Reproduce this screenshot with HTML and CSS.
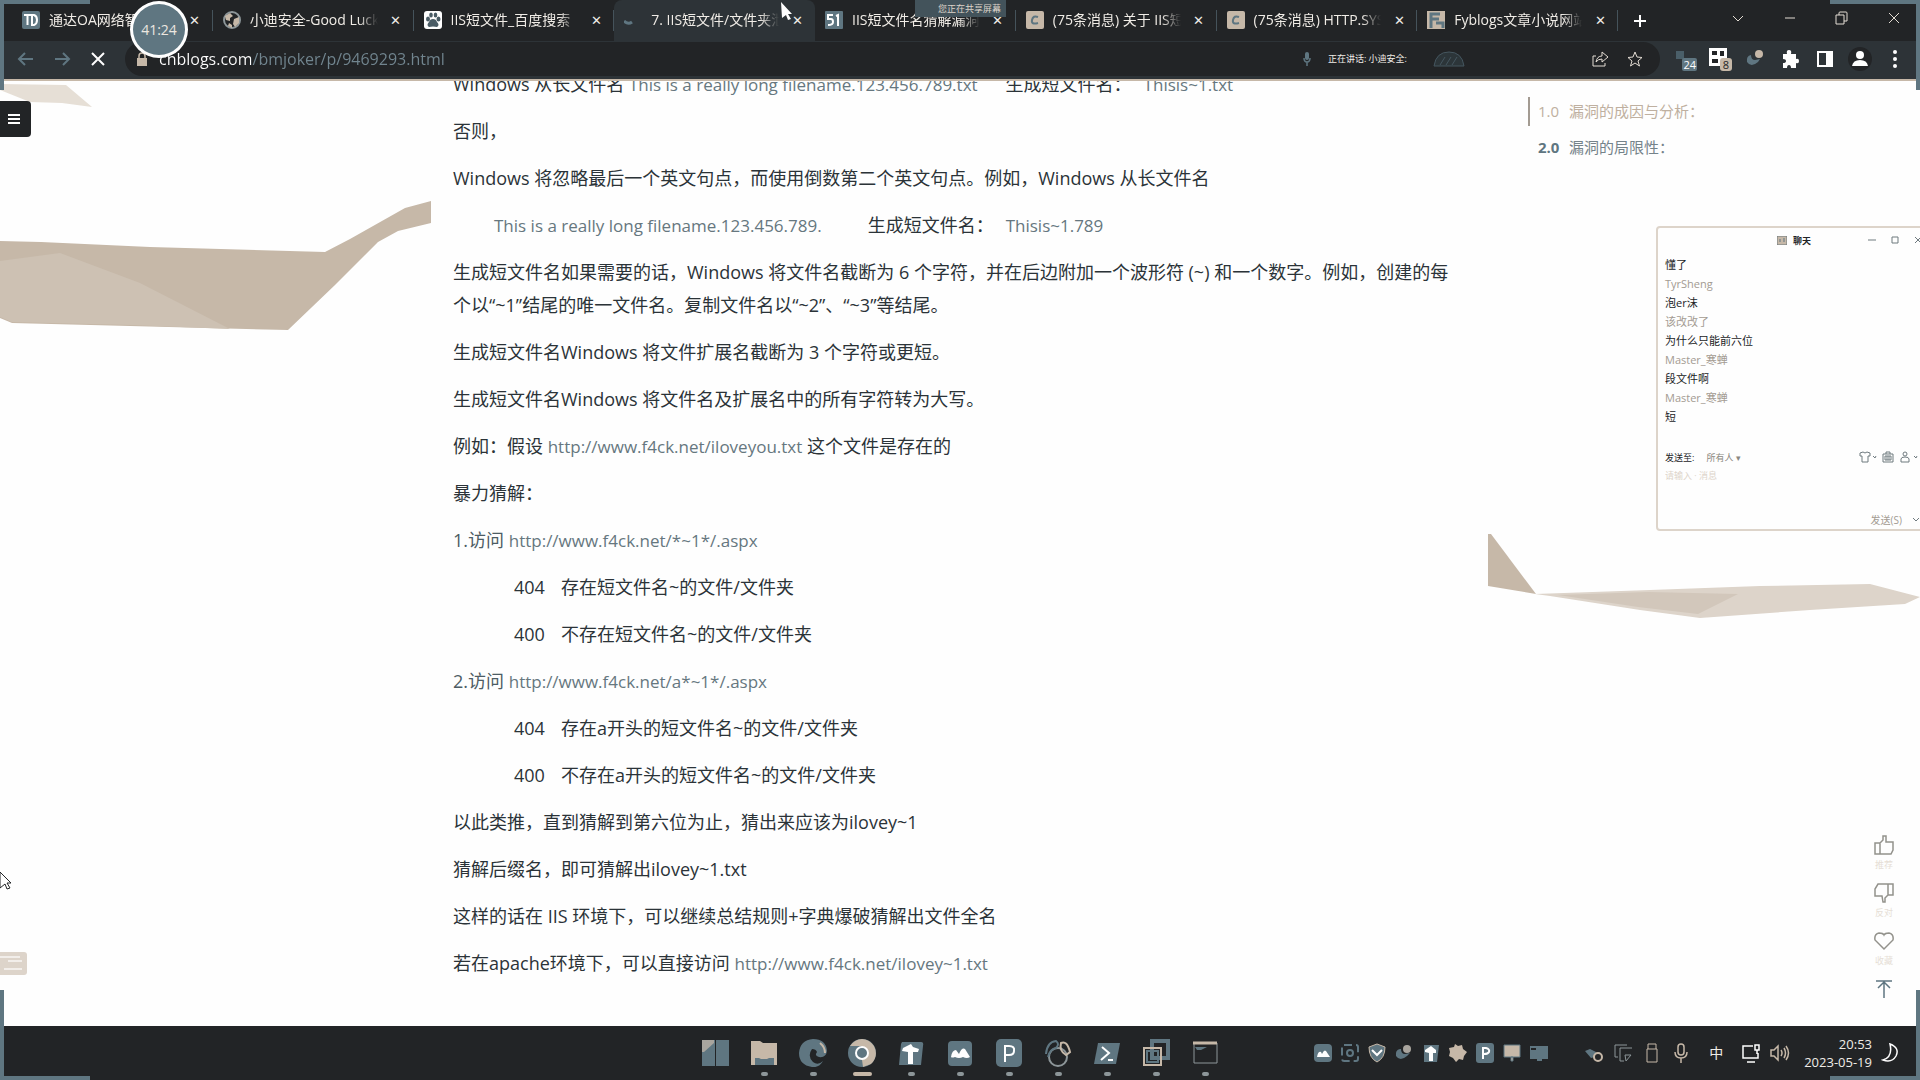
FILE: index.html
```html
<!DOCTYPE html>
<html lang="zh-CN">
<head>
<meta charset="utf-8">
<title>7. IIS短文件/文件夹</title>
<link rel="stylesheet" href="styles.css">
</head>
<body>
<header class="browser">
  <div class="tabbar">
    <nav class="tabs">
      <div class="tab"><svg class="fav" viewBox="0 0 18 18"><rect width="18" height="18" rx="2" fill="#5f7681"/><path d="M2 4h7M5.500 4v10M10 4v10h2q3-1 3-5t-3-5z" fill="none" stroke="#fefefe" stroke-width="2"/></svg><span class="tab-title">通达OA网络智能</span><button class="x" aria-label="关闭">✕</button></div>
      <div class="tab"><svg class="fav" viewBox="0 0 18 18"><circle cx="9" cy="9" r="8" fill="#222426" stroke="#8d9699" stroke-width="2"/><path d="M2 5l5-3 3 3-3 2 0 3-4-1zM11 8l5-2v6l-4 4-2-3zM6 12l3 2v3l-4-2z" fill="#c6b8a8"/></svg><span class="tab-title">小迪安全-Good Luck</span><button class="x" aria-label="关闭">✕</button></div>
      <div class="tab"><svg class="fav" viewBox="0 0 18 18"><rect width="18" height="18" rx="3" fill="#fefefe"/><g fill="#4a5c65"><ellipse cx="4" cy="8" rx="2" ry="2.500"/><ellipse cx="7" cy="4" rx="1.800" ry="2.500"/><ellipse cx="11.500" cy="4" rx="1.800" ry="2.500"/><ellipse cx="14.500" cy="8" rx="2" ry="2.500"/><path d="M9 8q3 0 4 3 3 3 0 5-4-1-8 0-3-2 0-5 1-3 4-3z"/></g></svg><span class="tab-title">IIS短文件_百度搜索</span><button class="x" aria-label="关闭">✕</button></div>
      <div class="tab active"><svg class="fav" viewBox="0 0 18 18"><path d="M0 10q4 4 8 1" fill="none" stroke="#5f7681" stroke-width="3"/></svg><span class="tab-title">7. IIS短文件/文件夹泄</span><button class="x" aria-label="关闭">✕</button></div>
      <div class="tab"><svg class="fav" viewBox="0 0 18 18"><rect width="18" height="18" rx="1" fill="#5f7681"/><path d="M8 4H3v4h3q2 0 2 3t-5 3M11 5l2-1v11" fill="none" stroke="#fefefe" stroke-width="2"/></svg><span class="tab-title">IIS短文件名猜解漏洞</span><button class="x" aria-label="关闭">✕</button></div>
      <div class="tab"><svg class="fav" viewBox="0 0 18 18"><rect width="18" height="18" rx="2" fill="#c6b8a8"/><path d="M12 6q-5-2-6 3t6 3" fill="none" stroke="#5f7681" stroke-width="2"/></svg><span class="tab-title">(75条消息) 关于 IIS短</span><button class="x" aria-label="关闭">✕</button></div>
      <div class="tab"><svg class="fav" viewBox="0 0 18 18"><rect width="18" height="18" rx="2" fill="#c6b8a8"/><path d="M12 6q-5-2-6 3t6 3" fill="none" stroke="#5f7681" stroke-width="2"/></svg><span class="tab-title">(75条消息) HTTP.SYS</span><button class="x" aria-label="关闭">✕</button></div>
      <div class="tab"><svg class="fav" viewBox="0 0 18 18"><rect width="18" height="18" fill="#c6b8a8"/><path d="M4 17V3h9M4 8h8M9 12h7v5" fill="none" stroke="#5f7681" stroke-width="3"/></svg><span class="tab-title">Fyblogs文章小说网站</span><button class="x" aria-label="关闭">✕</button></div>
    </nav>
    <button class="newtab" aria-label="新标签页"><svg viewBox="0 0 16 16"><path d="M8 2v12M2 8h12" stroke="#fefefe" stroke-width="2"/></svg></button>
    <div class="winctl">
      <button aria-label="搜索标签页"><svg viewBox="0 0 16 16"><path d="M3 6l5 5 5-5"/></svg></button>
      <button aria-label="最小化"><svg viewBox="0 0 16 16"><path d="M3 8h10"/></svg></button>
      <button aria-label="还原"><svg viewBox="0 0 16 16"><path d="M2 5h8v9H2zM5 5V3q0-1 1-1h6q1 0 1 1v8h-3"/></svg></button>
      <button aria-label="关闭窗口"><svg viewBox="0 0 16 16"><path d="M3 3l10 10M13 3L3 13"/></svg></button>
    </div>
  </div>
  <div class="toolbar">
    <button class="nav" aria-label="后退"><svg viewBox="0 0 18 18"><path d="M16 9H2M8 3L2 9l6 6" stroke="#5f7681"/></svg></button>
    <button class="nav" aria-label="前进"><svg viewBox="0 0 18 18"><path d="M2 9h14M10 3l6 6-6 6" stroke="#5f7681"/></svg></button>
    <button class="nav" aria-label="停止"><svg viewBox="0 0 18 18"><path d="M3 3l12 12M15 3L3 15" stroke="#fefefe"/></svg></button>
    <div class="omnibox">
      <svg class="lock" viewBox="0 0 10 14"><path d="M2 6V4q0-3 3-3t3 3v2" fill="none" stroke="#c6b8a8" stroke-width="1.500"/><rect y="6" width="10" height="8" fill="#c6b8a8"/></svg>
      <input class="url" aria-label="地址" value="cnblogs.com/bmjoker/p/9469293.html">
      <div class="speaker"><svg class="mic" viewBox="0 0 8 14"><rect x="2" width="4" height="8" rx="2" fill="#5f7681"/><path d="M1 6q0 4 3 4t3-4M4 10v4" fill="none" stroke="#5f7681" stroke-width="1.500"/></svg><span>正在讲话: 小迪安全:</span><svg class="wave" viewBox="0 0 34 18"><path d="M2 16Q4 2 17 2T32 16zM8 15l5-8M14 15l5-8M20 15l5-8" fill="#2c3539" stroke="#45565f"/></svg></div>
      <button class="obtn" aria-label="分享"><svg viewBox="0 0 18 18"><path d="M5 6H2v10h12v-3M5 12q1-6 6-6V2l6 5-6 5V9q-4 0-6 3z"/></svg></button>
      <button class="obtn" aria-label="收藏"><svg viewBox="0 0 18 18"><path d="M9 2l2 5 5 .500-4 3.500 1.500 5L9 13l-4.500 3L6 11 2 7.500 7 7z"/></svg></button>
    </div>
    <div class="exts">
      <button aria-label="扩展一"><svg viewBox="0 0 24 24"><path d="M3 4h8v8H3z" fill="#4a5f69"/><rect x="9" y="11" width="15" height="13" rx="2" fill="#5f7681"/></svg><span class="badge">24</span></button>
      <button aria-label="扩展二"><svg viewBox="0 0 24 24"><rect x="1" y="1" width="18" height="18" fill="#fefefe"/><path d="M4 4h5v4H4zM12 4h4v5h-4zM4 12h6v4H4z" fill="#222426"/><rect x="12" y="11" width="12" height="13" rx="3" fill="#c6b8a8"/></svg><span class="badge dark">8</span></button>
      <button aria-label="扩展三"><svg viewBox="0 0 24 24"><path d="M8 8q-5 1-4 7 4 6 11 0l2-3-5 1q-4 0-4-5z" fill="#5f7681"/><circle cx="16" cy="7" r="4" fill="#c6b8a8"/></svg></button>
      <button aria-label="扩展程序"><svg viewBox="0 0 24 24"><path d="M5 7h4q-1-4 2-4t2 4h5v5q3-1 3 2t-3 2v5h-5q0-3-2-3t-2 3H5v-5q3 0 3-2t-3-2z" fill="#fefefe"/></svg></button>
      <button aria-label="侧边栏"><svg viewBox="0 0 24 24"><path d="M5 5h14v14H5z" fill="none" stroke="#fefefe" stroke-width="2"/><path d="M13 5h6v14h-6z" fill="#fefefe"/></svg></button>
      <button aria-label="个人资料"><svg viewBox="0 0 24 24"><circle cx="12" cy="12" r="12" fill="#222426"/><circle cx="12" cy="8" r="4" fill="#fefefe"/><path d="M4 19q1-6 8-6t8 6z" fill="#fefefe"/></svg></button>
      <button aria-label="菜单"><svg viewBox="0 0 24 24"><g fill="#fefefe"><circle cx="12" cy="5" r="2"/><circle cx="12" cy="12" r="2"/><circle cx="12" cy="19" r="2"/></g></svg></button>
    </div>
  </div>
</header>

<main class="page">
  <svg class="deco deco-left" viewBox="0 0 432 260" aria-hidden="true">
    <path d="M0 3l66 1 26 22-30-4-32-1-30-12z" fill="#e6dfd6"/>
    <path d="M0 160l41 1 109 5 175 5 25-13 55-31 26-7v22l-33 8-20 11-43 43-47 45-158-4-118-3-12-5z" fill="#c6b8a8"/>
    <path d="M0 180l60-8 80 30 90 46-100-4-118-3-12-5z" fill="#cdc1b3"/>
  </svg>
  <svg class="deco deco-right" viewBox="0 0 432 90" aria-hidden="true">
    <path d="M0 0h3l45 60-48-8z" fill="#c6b8a8"/>
    <path d="M47 60l115-4 110-4 110-2 50 13-15 7-95 6-110 8-60-8-90-14z" fill="#ddd4ca"/>
    <path d="M70 61l90-3 90 2-40 20-60-7z" fill="#d2c7bb"/>
  </svg>
  <div class="left"><button class="menu" aria-label="目录"><svg viewBox="0 0 12 12"><path d="M0 2h12M0 6h12M0 10h12" stroke="#fefefe" stroke-width="2"/></svg></button></div>
  <article class="post">
    <p>Windows 从长文件名 <span class="en">This is a really long filename.123.456.789.txt</span><span class="gap">生成短文件名：</span><span class="gap-s en">Thisis~1.txt</span></p>
    <p>否则，</p>
    <p>Windows 将忽略最后一个英文句点，而使用倒数第二个英文句点。例如，Windows 从长文件名</p>
    <p class="in1"><span class="en">This is a really long filename.123.456.789.</span><span class="gap-l">生成短文件名：</span><span class="gap-s en">Thisis~1.789</span></p>
    <p>生成短文件名如果需要的话，Windows 将文件名截断为 6 个字符，并在后边附加一个波形符 (~) 和一个数字。例如，创建的每个以“~1”结尾的唯一文件名。复制文件名以“~2”、“~3”等结尾。</p>
    <p>生成短文件名Windows 将文件扩展名截断为 3 个字符或更短。</p>
    <p>生成短文件名Windows 将文件名及扩展名中的所有字符转为大写。</p>
    <p>例如：假设 <span class="en">http://www.f4ck.net/iloveyou.txt</span> 这个文件是存在的</p>
    <p>暴力猜解：</p>
    <p><span class="num">1.访问</span> <span class="en">http://www.f4ck.net/*~1*/.aspx</span></p>
    <p class="in2"><span class="code">404</span>存在短文件名~的文件/文件夹</p>
    <p class="in2"><span class="code">400</span>不存在短文件名~的文件/文件夹</p>
    <p><span class="num">2.访问</span> <span class="en">http://www.f4ck.net/a*~1*/.aspx</span></p>
    <p class="in2"><span class="code">404</span>存在a开头的短文件名~的文件/文件夹</p>
    <p class="in2"><span class="code">400</span>不存在a开头的短文件名~的文件/文件夹</p>
    <p>以此类推，直到猜解到第六位为止，猜出来应该为ilovey~1</p>
    <p>猜解后缀名，即可猜解出ilovey~1.txt</p>
    <p>这样的话在 IIS 环境下，可以继续总结规则+字典爆破猜解出文件全名</p>
    <p>若在apache环境下，可以直接访问 <span class="en">http://www.f4ck.net/ilovey~1.txt</span></p>
  </article>
  <nav class="toc">
    <a class="current" href="#c1"><span>1.0</span>漏洞的成因与分析：</a>
    <a href="#c2"><b>2.0</b>漏洞的局限性：</a>
  </nav>
  <section class="chat" aria-label="聊天">
    <div class="chat-head"><svg viewBox="0 0 10 9"><path d="M0 0h10v9H0z" fill="#c6b8a8"/><path d="M3 3v3M7 2v4" stroke="#5f7681"/></svg><strong>聊天</strong><div class="chat-ctl"><button aria-label="最小化"><svg viewBox="0 0 8 8"><path d="M0 4h8"/></svg></button><button aria-label="最大化"><svg viewBox="0 0 8 8"><path d="M1 1h6v6H1z"/></svg></button><button aria-label="关闭"><svg viewBox="0 0 8 8"><path d="M1 1l6 6M7 1L1 7"/></svg></button></div></div>
    <ul class="log">
      <li>懂了</li><li class="who">TyrSheng</li><li>泡er沫</li><li class="who">该改改了</li><li>为什么只能前六位</li><li class="who">Master_寒蝉</li><li>段文件啊</li><li class="who">Master_寒蝉</li><li>短</li>
    </ul>
    <div class="sendto"><label for="to">发送至:</label><select id="to"><option>所有人 ▾</option></select>
      <div class="tools"><svg viewBox="0 0 20 12"><path d="M3 2l3-1q2 2 4 0l3 1v3l-2 0v6H5V5H3zM16 5l2 2 1-2"/></svg><svg class="t12" viewBox="0 0 12 12"><path d="M1 3h10v8H1zM4 3V1h4v2M3 5h6v4H3zM5 5v4M7 5v4"/></svg><svg viewBox="0 0 20 12"><circle cx="6" cy="3" r="2"/><path d="M2 11V8q0-2 4-2t4 2v3zM15 5l2 2 1-2"/></svg></div></div>
    <textarea class="say" aria-label="消息" placeholder="请输入 · 消息"></textarea>
    <div class="send"><button>发送(S)</button><svg viewBox="0 0 8 8"><path d="M1 3l3 3 3-3"/></svg></div>
  </section>
  <div class="actions">
    <button><svg viewBox="0 0 20 20"><path d="M1 8h5l3-3V1h3v6h7v8l-2 4H1zM6 8v11"/></svg><small>推荐</small></button>
    <button><svg viewBox="0 0 20 20"><path d="M19 12h-5l-3 3v4H9l-1-6H1V6l3-5h15zM14 1v11"/></svg><small>反对</small></button>
    <button><svg viewBox="0 0 20 20"><path d="M10 18L1 9q-1-6 4-7 4 0 5 2 1-2 5-2 5 1 4 7z"/></svg><small>收藏</small></button>
    <button aria-label="返回顶部"><svg viewBox="0 0 20 20"><path d="M2 2h16M10 3v16M4 9l6-6 6 6" stroke="#5f7681"/></svg></button>
  </div>
  <svg class="mail" viewBox="0 0 27 23" aria-hidden="true"><rect x="-3" width="30" height="23" rx="3" fill="#ddd4ca"/><path d="M0 5h20M8 9h14M4 17h18" stroke="#f2eeea" stroke-width="2"/></svg>
</main>

<footer class="taskbar">
  <div class="apps">
    <button class="app" aria-label="开始"><svg viewBox="0 0 28 28"><path d="M1 1h13v26H1zM15 1h13v26H15z" fill="#5f7681"/><path d="M1 1h12v3L3 13H1z" fill="#a9a59e"/></svg></button>
    <button class="app run" aria-label="文件"><svg viewBox="0 0 28 28"><path d="M1 2h9l3 2h14v22H1z" fill="#c6b8a8"/><path d="M5 26v-7h4l2 1h6l2-1h5v7z" fill="#5f7681"/></svg></button>
    <button class="app run" aria-label="Edge"><svg viewBox="0 0 28 28"><path d="M14 0q13 0 14 12-1 7-8 6-5-1-2-5-1-3-5-3-5 7 1 13 5 4 10-1-4 7-11 6Q0 26 0 14 1 1 14 0z" fill="#5f7681"/><path d="M21 4q5 4 5 10" fill="none" stroke="#c6b8a8" stroke-width="2"/></svg></button>
    <button class="app run wide" aria-label="Chrome"><svg viewBox="0 0 28 28"><circle cx="14" cy="14" r="14" fill="#5f7681"/><path d="M2 7Q7 0 14 0t12 7zM14 7h12q5 10-3 18l-8 3-1-7z" fill="#c6b8a8"/><circle cx="14" cy="14" r="6" fill="#5f7681" stroke="#fefefe" stroke-width="2"/></svg></button>
    <button class="app run" aria-label="工具"><svg viewBox="0 0 28 28"><path d="M5 3h19q3 0 2 4l-2 19H2L4 5z" fill="#5f7681"/><path d="M14 5l2 3 6 2-1 3h-5v12h-5V13l-6-1 1-3z" fill="#fefefe"/></svg></button>
    <button class="app run" aria-label="会议"><svg viewBox="0 0 28 28"><rect x="2" y="2" width="24" height="25" rx="4" fill="#5f7681"/><path d="M5 18q1-7 5-7l3 4q3-7 6-5l5 8q-3 2-7 0-4 2-8 0-3 1-4 0z" fill="#fefefe"/></svg></button>
    <button class="app run" aria-label="PyCharm"><svg viewBox="0 0 28 28"><rect x="1" width="26" height="28" rx="5" fill="#5f7681"/><path d="M10 23V7h4q6 0 5 5 0 4-5 4h-3" fill="none" stroke="#fefefe" stroke-width="2"/></svg></button>
    <button class="app run" aria-label="抓包"><svg viewBox="0 0 28 28"><g fill="none" stroke="#5f7681" stroke-width="2"><circle cx="14" cy="18" r="9" stroke="#8d9699"/><path d="M2 15Q3 3 12 2q4 3 0 7-6 1-8 9"/><path d="M17 4q6-3 9 9l-4 3q-7-4-5-12z" stroke="#c6b8a8"/></g></svg></button>
    <button class="app run" aria-label="终端"><svg viewBox="0 0 28 28"><path d="M5 4h22l-4 21H1z" fill="#5f7681"/><path d="M9 8l7 6-8 7M15 21h5" fill="none" stroke="#fefefe" stroke-width="2"/></svg></button>
    <button class="app run" aria-label="虚拟机"><svg viewBox="0 0 28 28"><path d="M10 2h16v17H10z" fill="none" stroke="#5f7681" stroke-width="4"/><path d="M2 9h17v17H2z" fill="none" stroke="#c6b8a8" stroke-width="2"/><path d="M5 12h11v11H5z" fill="none" stroke="#5f7681" stroke-width="2"/></svg></button>
    <button class="app run" aria-label="命令行"><svg viewBox="0 0 28 28"><path d="M3 4h23v20H3z" fill="none" stroke="#8d9699"/><path d="M2 4h24" stroke="#c6b8a8" stroke-width="3"/><path d="M4 8h12l-6 3H6z" fill="#5f7681"/></svg></button>
  </div>
  <div class="tray">
    <div class="mini">
      <svg viewBox="0 0 20 20"><rect x="1" y="1" width="18" height="18" rx="4" fill="#5f7681"/><path d="M4 14q1-6 4-5l1 2q2-5 4-3l4 6z" fill="#fefefe"/></svg>
      <svg viewBox="0 0 20 20"><rect x="2" y="2" width="16" height="16" rx="2" fill="none" stroke="#5f7681" stroke-width="2" stroke-dasharray="8 4"/><circle cx="10" cy="10" r="3" fill="none" stroke="#5f7681" stroke-width="2"/></svg>
      <svg viewBox="0 0 20 20"><path d="M2 4l8-3 8 3q0 11-8 15Q2 15 2 4z" fill="#5f7681" stroke="#c6b8a8"/><path d="M5 7l5 5 5-5" fill="none" stroke="#fefefe" stroke-width="2"/></svg>
      <svg viewBox="0 0 20 20"><path d="M6 6q-5 1-4 7 4 6 11 0l3-3-5 1q-4 0-4-5z" fill="#5f7681"/><circle cx="13" cy="6" r="4" fill="#a9a59e"/></svg>
      <svg viewBox="0 0 20 20"><path d="M3 2h15l-2 17H3z" fill="#5f7681"/><path d="M10 3l5 4v3h-3v8H8v-8l-4-1V7z" fill="#fefefe"/></svg>
      <svg viewBox="0 0 20 20"><path d="M7 1l3 2 4-1 1 4 4 3-3 4-1 4-4-1-3 3-3-4-4-2 1-4-1-4 5-1z" fill="#c6b8a8"/></svg>
      <svg viewBox="0 0 20 20"><rect x="1" width="18" height="20" rx="3" fill="#5f7681"/><path d="M8 16V5h3q4 1 3 4-1 2-5 2" fill="none" stroke="#fefefe" stroke-width="2"/></svg>
      <svg viewBox="0 0 20 20"><path d="M2 2h16v12H2zM9 14h2v4H9z" fill="#c6b8a8" stroke="#5f7681"/></svg>
      <svg viewBox="0 0 20 20"><path d="M1 3h18v13H1zM8 16h5v2H8z" fill="#5f7681"/><path d="M2 6h5" stroke="#222426" stroke-width="2"/></svg>
    </div>
    <div class="mini sys">
      <svg viewBox="0 0 20 20"><path d="M1 8l5-2 6 3-1 5-4 1z" fill="#5f7681"/><circle cx="14" cy="14" r="4" fill="#222426" stroke="#c6b8a8" stroke-width="2"/></svg>
      <svg viewBox="0 0 20 20"><path d="M14 2H2v12h3M19 5H7v13h4M12 12h6l-5 6z" fill="none" stroke="#8d9699"/></svg>
      <svg viewBox="0 0 20 20"><path d="M6 6V1h8v5M5 6h10v13H5z" fill="none" stroke="#c6b8a8"/></svg>
      <svg viewBox="0 0 20 20"><rect x="7" y="1" width="6" height="11" rx="3" fill="none" stroke="#c6b8a8" stroke-width="1.500"/><path d="M4 9q0 6 6 6t6-6M10 15v5" fill="none" stroke="#c6b8a8" stroke-width="1.500"/></svg>
      <span class="ime">中</span>
      <svg viewBox="0 0 20 20"><path d="M12 3H2v12h15v-5M6 19h8M14 2h4v5h-4zM16 7v4" fill="none" stroke="#fefefe" stroke-width="1.500"/></svg>
      <svg viewBox="0 0 20 20"><path d="M1 7h3l4-4v14l-4-4H1zM11 7q2 3 0 6M14 5q3 5 0 10M16 3q5 7 0 14" fill="none" stroke="#c6b8a8" stroke-width="1.500"/></svg>
    </div>
    <time class="clock"><span>20:53</span><span>2023-05-19</span></time>
    <svg class="moon" viewBox="0 0 20 20"><path d="M9 1q10 4 6 12-4 7-13 4 10-3 7-16z" fill="none" stroke="#fefefe" stroke-width="1.500"/></svg>
  </div>
</footer>

<div class="share">您正在共享屏幕</div>
<div class="timer">41:24</div>
<svg class="cursor tab-cursor" viewBox="0 0 14 20" aria-hidden="true"><path d="M1 1l11 12H8l3 5-3 1-2-5-4 3z" fill="#fefefe"/></svg>
<svg class="cursor page-cursor" viewBox="0 0 14 20" aria-hidden="true"><path d="M0 1l11 11H7l3 5-3 1-2-5-5 4z" fill="#fefefe" stroke="#222426"/></svg>
<i class="corner tl"></i><i class="corner tr"></i><i class="corner bl"></i><i class="corner br"></i>
</body>
</html>
```
FILE: styles.css
```css
:root {
  --dark: #222426;
  --bar: #2d3337;
  --slate: #5f7681;
  --tan: #c6b8a8;
  --paper: #fefefe;
}
* { box-sizing: border-box; }
body {
  margin: 0;
  height: 100vh;
  display: flex;
  flex-direction: column;
  overflow: hidden;
  background: var(--paper);
  color: #2b3338;
  font-family: "Open Sans", "Noto Sans CJK SC", sans-serif;
}
button, input, select, textarea { font: inherit; color: inherit; background: none; border: 0; padding: 0; margin: 0; }
svg { display: block; flex: none; }

/* browser chrome */
.browser { background: var(--dark); color: #f0ece6; border-bottom: 2px solid var(--tan); flex: none; }
.tabbar { display: flex; align-items: stretch; height: 41px; padding-left: 12px; }
.tabs { display: flex; flex: 0 1 1606px; min-width: 0; }
.tab { flex: 1 1 0; min-width: 0; display: flex; align-items: center; padding: 0 12px 2px 10px; position: relative; }
.tab::after { content: ""; position: absolute; right: 0; top: 10px; bottom: 10px; border-right: 1px solid #45535b; }
.tab.active { background: var(--bar); border-radius: 8px 8px 0 0; }
.tab.active::after { display: none; }
.fav { width: 18px; height: 18px; margin-right: 9px; }
.tab-title { flex: 1; min-width: 0; overflow: hidden; white-space: nowrap; font-size: 14px; line-height: 20px; margin-right: 12px; -webkit-mask-image: linear-gradient(90deg, #000 85%, transparent); mask-image: linear-gradient(90deg, #000 85%, transparent); }
.x { width: 12px; font-size: 13px; line-height: 20px; }
.newtab { width: 44px; display: grid; place-items: center; }
.newtab svg { width: 16px; }
.winctl { margin-left: auto; display: flex; padding-bottom: 6px; }
.winctl button { width: 52px; display: grid; place-items: center; }
.winctl svg { width: 16px; fill: none; stroke: #e3dcd3; }

.toolbar { display: flex; align-items: center; height: 38px; background: var(--bar); padding: 0 13px 3px 8px; }
.nav { width: 36px; display: grid; place-items: center; }
.nav svg { width: 18px; fill: none; stroke-width: 2; }
.omnibox { flex: 1; display: flex; align-items: center; height: 34px; border-radius: 17px; background: var(--dark); margin: 0 13px 0 9px; padding: 0 8px 0 12px; }
.lock { width: 10px; height: 14px; margin-right: 12px; }
.url { flex: 1; min-width: 0; font-size: 16px; line-height: 24px; background: linear-gradient(90deg, #fefefe 92px, #71858f 92px); -webkit-background-clip: text; background-clip: text; color: transparent; }
.speaker { display: flex; align-items: center; gap: 17px; font-size: 9px; margin-right: 116px; }
.speaker span { margin-right: 8px; }
.mic { width: 8px; height: 14px; }
.wave { width: 34px; height: 18px; }
.obtn { width: 35px; display: grid; place-items: center; }
.obtn svg { width: 18px; fill: none; stroke: #e3dcd3; stroke-width: 1; }
.exts { display: flex; gap: 11px; }
.exts button { position: relative; width: 24px; height: 24px; }
.exts svg { width: 24px; }
.badge { position: absolute; right: 1px; bottom: -1px; font-size: 11px; line-height: 14px; color: var(--paper); }
.badge.dark { right: 3px; color: var(--dark); }

/* page */
.page { position: relative; flex: 1; min-height: 0; display: flex; overflow: hidden; }
.deco { position: absolute; }
.deco-left { left: 0; top: 0; width: 432px; }
.deco-right { right: 0; top: 453px; width: 432px; }
.left { width: 453px; flex: none; padding-top: 20px; }
.menu { position: relative; width: 31px; height: 36px; border-radius: 0 4px 4px 0; background: var(--dark); display: grid; place-items: center; padding-right: 4px; }
.menu svg { width: 12px; }
.post { position: relative; flex: 1; min-width: 0; margin-top: -13px; font-size: 18px; line-height: 33px; }
.post p { margin: 0 0 14px; }
.en { font-size: 17px; color: #66777f; }
.num { color: #4d5c64; }
.in1 { padding-left: 41px; }
.in2 { padding-left: 61px; }
.gap { margin-left: 28px; }
.gap-l { margin-left: 46px; }
.gap-s { margin-left: 12px; }
.code { display: inline-block; width: 47px; }
.toc { width: 392px; flex: none; margin-left: 65px; padding-top: 16px; font-size: 15px; line-height: 29px; }
.toc a { display: block; margin-bottom: 7px; padding-left: 8px; border-left: 2px solid transparent; color: #75838a; text-decoration: none; }
.toc a.current { color: #bfb0a0; border-color: #a39b92; }
.toc span, .toc b { display: inline-block; width: 31px; }
.toc b { color: var(--slate); }

.chat { position: absolute; left: calc(100% - 264px); top: 145px; width: 280px; height: 305px; border: 2px solid #ddd4ca; border-radius: 4px; background: var(--paper); padding: 0 7px; display: flex; flex-direction: column; font-size: 11px; color: #222426; }
.chat-head { display: flex; align-items: center; height: 24px; padding-left: 112px; gap: 6px; font-size: 9px; }
.chat-head > svg { width: 10px; }
.chat-ctl { display: flex; gap: 15px; margin-left: 51px; }
.chat-ctl svg { width: 8px; }
.chat svg { fill: none; stroke: #6f7a7f; }
.log { list-style: none; margin: 3px 0 0; padding: 0; line-height: 19px; flex: 1; }
.who { color: #a39b92; }
.sendto { display: flex; align-items: center; height: 18px; gap: 12px; font-size: 9px; }
.sendto select { appearance: none; color: #8b8880; }
.tools { display: flex; gap: 5px; margin-left: 104px; }
.tools svg { width: 20px; height: 12px; }
.tools .t12 { width: 12px; }
.say { resize: none; height: 43px; font-size: 9px; line-height: 20px; }
.say::placeholder { color: #ddd4ca; opacity: 1; }
.send { display: flex; align-items: center; justify-content: flex-end; gap: 10px; height: 20px; padding-right: 7px; font-size: 10px; color: #a39b92; }
.send svg { width: 8px; }

.actions { position: absolute; right: 16px; bottom: 23px; width: 40px; display: flex; flex-direction: column; gap: 8px; }
.actions button { height: 40px; display: flex; flex-direction: column; align-items: center; }
.actions button:last-child { height: 24px; }
.actions svg { width: 20px; fill: none; stroke: #93928c; stroke-width: 1.5px; }
.actions small { font-size: 9px; line-height: 20px; color: #e6dfd6; }
.mail { position: absolute; left: 0; bottom: 51px; width: 27px; }

/* taskbar */
.taskbar { position: relative; flex: none; height: 54px; background: var(--dark); color: #f0ece6; display: flex; align-items: center; justify-content: flex-end; }
.apps { position: absolute; left: 50%; top: 0; transform: translateX(-50%); display: flex; height: 54px; gap: 1px; }
.app { position: relative; width: 48px; padding: 13px 0 0 10px; display: flex; align-items: flex-start; }
.app svg { width: 28px; }
.run::after { content: ""; position: absolute; left: 21px; bottom: 4px; width: 7px; height: 4px; border-radius: 2px; background: #8d9699; }
.run.wide::after { left: 15px; width: 19px; background: var(--tan); }
.tray { display: flex; align-items: center; padding-right: 19px; }
.mini { display: flex; gap: 7px; margin-right: 35px; }
.mini svg { width: 20px; }
.sys { gap: 9px; margin-right: 14px; }
.ime { width: 24px; font-size: 14px; line-height: 20px; text-align: center; margin: 0 4px; }
.clock { display: flex; flex-direction: column; align-items: flex-end; font-size: 13px; line-height: 18px; }
.moon { width: 20px; margin-left: 9px; }

/* screen-sharing overlays */
.share { position: absolute; left: 915px; top: 0; width: 91px; height: 17px; padding-left: 23px; background: #43535b; color: #ddd4ca; font-size: 9px; line-height: 17px; white-space: nowrap; }
.timer { position: absolute; left: 130px; top: 1px; width: 58px; height: 57px; border: 3px solid var(--paper); border-radius: 50%; background: var(--slate); color: #ece7e0; font-size: 14px; line-height: 51px; text-align: center; }
.cursor { position: absolute; width: 14px; }
.tab-cursor { left: 780px; top: 1px; }
.page-cursor { left: 0; top: 871px; }
.corner { position: absolute; width: 90px; height: 90px; border: 0 solid var(--slate); pointer-events: none; }
.tl { left: 0; top: 0; border-width: 4px 0 0 4px; }
.tr { right: 0; top: 0; border-width: 4px 4px 0 0; }
.bl { left: 0; bottom: 0; border-width: 0 0 4px 4px; }
.br { right: 0; bottom: 0; border-width: 0 4px 4px 0; }
```
